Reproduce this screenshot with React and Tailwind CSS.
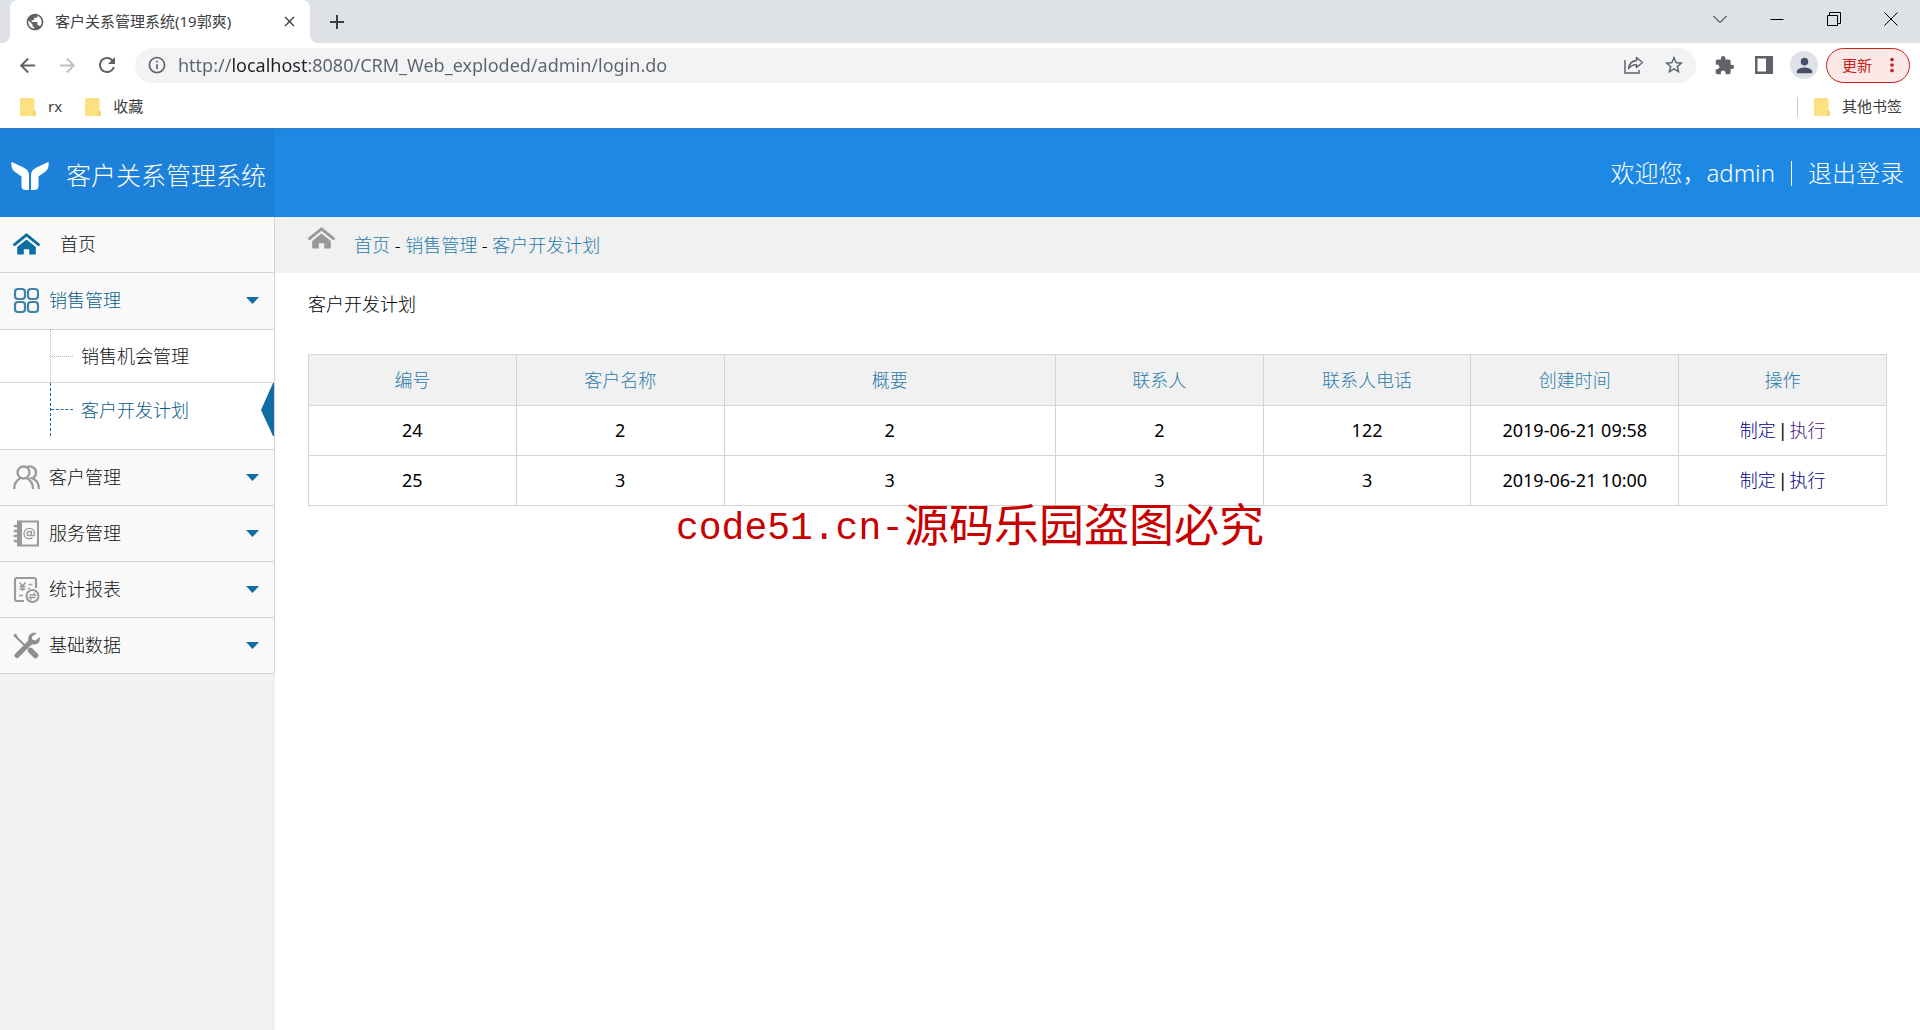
import React, { useState } from "react";
import {
  MdArrowBack,
  MdArrowForward,
  MdClose,
  MdExtension,
  MdInfoOutline,
  MdMoreVert,
  MdPerson,
  MdPublic,
  MdRefresh,
  MdStarBorder,
} from "react-icons/md";

const HomeIcon = ({ className = "" }) => (
  <svg viewBox="0 0 27 22" className={className} fill="currentColor" aria-hidden="true">
    <path
      d="M1.5 11.6 13.5 1.8 25.5 11.6"
      fill="none"
      stroke="currentColor"
      strokeWidth="2.8"
      strokeLinecap="round"
      strokeLinejoin="round"
    />
    <path d="M13.5 6.4 22.8 14v6.4a1.2 1.2 0 0 1-1.2 1.2h-5.4v-5.4h-5.4v5.4H5.4a1.2 1.2 0 0 1-1.2-1.2V14z" />
  </svg>
);

const GridIcon = () => (
  <svg viewBox="0 0 27 27" className="size-[27px] text-[#3f82a8]" fill="none" stroke="currentColor" strokeWidth="2.2" aria-hidden="true">
    <rect x="2" y="2" width="10" height="10" rx="3" />
    <rect x="15" y="2" width="10" height="10" rx="3" />
    <rect x="2" y="15" width="10" height="10" rx="3" />
    <rect x="15" y="15" width="10" height="10" rx="3" />
  </svg>
);

const UsersIcon = () => (
  <svg viewBox="0 0 27 27" className="size-[27px] text-[#9a9a9a]" fill="none" stroke="currentColor" strokeWidth="2.3" aria-hidden="true">
    <circle cx="10.5" cy="8.5" r="6" />
    <path d="M1.2 25c0-5.4 2.5-9 6.3-11M13.5 14c4 2 6.500 5.600 6.500 11" />
    <path d="M14 3.200c4-2.200 9 .6 9 5.300 0 2.800-1.500 4.800-4 5.700 4.300 1.500 6.800 5.800 6.800 10.800" />
  </svg>
);

const BookIcon = () => (
  <svg viewBox="0 0 27 27" className="size-[27px] text-[#9a9a9a]" fill="none" stroke="currentColor" aria-hidden="true">
    <path d="M5 1.500h20v24H5z" strokeWidth="2" />
    <path d="M7.500 2v23" strokeWidth="3" />
    <path d="M1.800 6H7M1.800 11H7M1.800 16H7M1.800 21H7" strokeWidth="2.400" strokeLinecap="round" />
    <circle cx="16.300" cy="13.500" r="2.200" strokeWidth="1.300" />
    <path d="M18.500 11v3.400c0 2.200 3 1.800 3-1 0-3-2.200-5-5.200-5s-5.300 2.200-5.300 5.200 2.300 5.100 5.300 5.100c1.200 0 2.200-.3 3-.8" strokeWidth="1.300" />
  </svg>
);

const ReportIcon = () => (
  <svg viewBox="0 0 27 27" className="size-[27px] text-[#9a9a9a]" fill="none" stroke="currentColor" aria-hidden="true">
    <path d="M11 25H4a2 2 0 0 1-2-2V4a2 2 0 0 1 2-2h17a2 2 0 0 1 2 2v8" strokeWidth="2.200" />
    <path d="m6.500 6.500 3 3.500 3-3.500M9.500 10v5M6.500 10.500h6M6.500 13h6M15.500 8.500h4M6 19.500h4M15 12.500h2" strokeWidth="1.500" />
    <circle cx="19.500" cy="20" r="6" strokeWidth="2" />
    <path d="M16.500 19h6l-2-2M22.500 21.500h-6l2 2" strokeWidth="1.300" />
  </svg>
);

const ToolsIcon = () => (
  <svg viewBox="0 0 27 27" className="size-[27px] text-[#8f8f8f]" fill="none" stroke="currentColor" strokeLinecap="round" aria-hidden="true">
    <path d="m1.500 3.500 13 12.500" strokeWidth="1.800" />
    <path d="M.5 2.200 3 1.800l2.500 4.700z" fill="currentColor" stroke="none" />
    <path d="m17.500 18.500 5 5" strokeWidth="5.500" />
    <path d="M17 10.500 4 23.500" strokeWidth="5" />
    <path d="M23.800 1.200c-4-1.500-8.800 1-8.500 5.500.1 1.800-.3 2.800-1.300 3.800l3.200 3.200c1-1 2-1.400 3.800-1.200 4.300.3 7-3.800 5.600-7.600l-4 3.600-3.200-.8-.6-3z" fill="currentColor" stroke="none" />
  </svg>
);

const Logo = () => (
  <svg viewBox="0 0 38 30" className="h-[30px] w-[38px] shrink-0" fill="#ffffff" aria-hidden="true">
    <path d="M.4.8 12.500 6.600C16 8.300 18 10.500 18 14.500V29h-3.500c-2.500 0-4-1.500-4-4V15.500L3.800 10.700C1.500 9 .4 6.500.4 4z" />
    <path d="M37.600.8 25.500 6.600C22 8.300 20 10.500 20 14.500V29h3.500c2.500 0 4-1.500 4-4V15.500l6.700-4.800c2.300-1.700 3.400-4.200 3.400-6.700z" />
  </svg>
);

const FolderIcon = () => (
  <svg viewBox="0 0 16 18" className="h-[18px] w-4 shrink-0" aria-hidden="true">
    <rect x="0" y="0" width="14.500" height="18" rx="1.500" fill="#fde080" />
    <path d="M13 12.500h1.500a1.500 1.500 0 0 1 1.500 1.500v2.500a1.500 1.500 0 0 1-3 0z" fill="#f6d365" />
  </svg>
);

const Caret = () => (
  <svg viewBox="0 0 13 7" className="h-[7px] w-[13px]" aria-hidden="true">
    <path d="M0 0h13L6.500 7z" fill="#0e6ea3" />
  </svg>
);

const bookmarks = ["rx", "收藏"];

const closedMenus = [
  { label: "客户管理", Icon: UsersIcon },
  { label: "服务管理", Icon: BookIcon },
  { label: "统计报表", Icon: ReportIcon },
  { label: "基础数据", Icon: ToolsIcon },
];

const columns = ["编号", "客户名称", "概要", "联系人", "联系人电话", "创建时间", "操作"];

const plans = [
  { id: 24, name: "2", summary: "2", contact: "2", phone: "122", created: "2019-06-21 09:58", visited: true },
  { id: 25, name: "3", summary: "3", contact: "3", phone: "3", created: "2019-06-21 10:00", visited: false },
];

const TabStrip = () => (
  <div className="flex h-[43px] items-stretch bg-[#dee1e6]">
    <div className="flex w-[10px] items-end bg-white">
      <div className="h-full w-full rounded-br-lg bg-[#dee1e6]" />
    </div>
    <div className="bg-[#dee1e6]">
      <div className="flex h-full w-[300px] items-center rounded-t-lg bg-white pr-3 pl-[15px] text-[#3c4043]">
        <MdPublic className="size-5 shrink-0 text-[#5f6368]" />
        <span className="ml-[10px] flex-1 truncate text-[15px]">客户关系管理系统(19郭爽)</span>
        <button type="button" aria-label="关闭标签页">
          <MdClose className="size-[17px]" />
        </button>
      </div>
    </div>
    <div className="bg-white">
      <div className="flex h-full w-[54px] items-center justify-center rounded-bl-lg bg-[#dee1e6]">
        <button type="button" aria-label="新标签页">
          <svg viewBox="0 0 16 16" className="size-4 text-[#3c4043]" stroke="currentColor" strokeWidth="2">
            <path d="M8 1v14M1 8h14" />
          </svg>
        </button>
      </div>
    </div>
    <div className="ml-auto flex pr-px text-black">
      <button type="button" aria-label="搜索标签页" className="flex w-[57px] items-center justify-center pb-[6px]">
        <svg viewBox="0 0 14 14" className="size-[14px]" fill="none" stroke="currentColor">
          <path d="m.5 4 6.500 6.500L13.500 4" />
        </svg>
      </button>
      <button type="button" aria-label="最小化" className="flex w-[57px] items-center justify-center pb-[6px]">
        <svg viewBox="0 0 14 14" className="size-[14px]" fill="none" stroke="currentColor">
          <path d="M.5 7.500h13" />
        </svg>
      </button>
      <button type="button" aria-label="还原" className="flex w-[57px] items-center justify-center pb-[6px]">
        <svg viewBox="0 0 14 14" className="size-[14px]" fill="none" stroke="currentColor">
          <path d="M.5 3.500h10v10H.5zM2.500 3.500v-3h11v11h-3" />
        </svg>
      </button>
      <button type="button" aria-label="关闭" className="flex w-[57px] items-center justify-center pb-[6px]">
        <svg viewBox="0 0 14 14" className="size-[14px]" fill="none" stroke="currentColor">
          <path d="m.5.5 13 13M13.500.5l-13 13" />
        </svg>
      </button>
    </div>
  </div>
);

const Toolbar = () => (
  <div className="flex h-11 items-center bg-white pr-[10px] pl-[7px] text-[#5f6368]">
    <button type="button" aria-label="后退" className="flex w-10 justify-center">
      <MdArrowBack className="size-[23px]" />
    </button>
    <button type="button" aria-label="前进" className="flex w-10 justify-center text-[#bdc1c6]">
      <MdArrowForward className="size-[23px]" />
    </button>
    <button type="button" aria-label="刷新" className="flex w-10 justify-center">
      <MdRefresh className="size-6" />
    </button>
    <div className="mx-2 flex h-[35px] flex-1 items-center rounded-full bg-[#f1f3f4] pr-[10px] pl-3">
      <MdInfoOutline className="size-5 shrink-0" />
      {/* host part of the address is darker than the rest */}
      <input
        type="text"
        aria-label="地址"
        defaultValue="http://localhost:8080/CRM_Web_exploded/admin/login.do"
        className="ml-[11px] min-w-0 flex-1 bg-[linear-gradient(90deg,#5f6368_54px,#202124_54px,#202124_129px,#5f6368_129px)] bg-clip-text text-lg text-transparent outline-none"
      />
      <button type="button" aria-label="分享" className="flex w-10 justify-center">
        <svg viewBox="0 0 20 18" className="h-[18px] w-5" fill="none" stroke="currentColor" strokeWidth="1.500">
          <path d="M1 4v13h14v-3" />
          <path d="M12.500 1.500 18.500 6.500l-6 5V8.700c-3.500 0-6 1-8 3.800.5-4.500 3.300-7.500 8-8z" strokeLinejoin="round" />
        </svg>
      </button>
      <button type="button" aria-label="收藏此页" className="-mr-2 flex w-10 justify-center">
        <MdStarBorder className="size-[22px]" />
      </button>
    </div>
    <button type="button" aria-label="扩展程序" className="flex w-10 justify-center">
      <MdExtension className="size-[21px]" />
    </button>
    <button type="button" aria-label="侧边栏" className="flex w-10 justify-center">
      <svg viewBox="0 0 18 18" className="size-[18px]">
        <path d="M0 0h18v18H0zM2.500 2.500v13H11v-13z" fill="currentColor" fillRule="evenodd" />
      </svg>
    </button>
    <button type="button" aria-label="用户" className="flex w-10 justify-center">
      <span className="flex size-7 items-center justify-center rounded-full bg-[#dee1e6]">
        <MdPerson className="size-[23px] text-[#47506b]" />
      </span>
    </button>
    <button
      type="button"
      className="ml-[2px] flex h-[35px] w-[84px] items-center justify-between rounded-full border border-[#c5221f] bg-[#fce8e6] pr-[6px] pl-[15px] text-[15px] text-[#c5221f]"
    >
      更新
      <MdMoreVert className="size-[22px]" />
    </button>
  </div>
);

const BookmarksBar = () => (
  <div className="flex h-[41px] items-center bg-white pr-[18px] pb-[2px] pl-5 text-[15px] text-[#3c4043]">
    {bookmarks.map((name) => (
      <a key={name} href="#" className="mr-[23px] flex items-center gap-3">
        <FolderIcon />
        {name}
      </a>
    ))}
    <a href="#" className="ml-auto flex items-center gap-3">
      <span className="mr-1 h-5 w-px bg-[#c8ccd1]" />
      <FolderIcon />
      其他书签
    </a>
  </div>
);

const Header = () => (
  <header className="flex h-[89px] items-stretch border-t border-[#2f7fc1] bg-[#1e88e5] font-light text-white">
    <div className="flex w-[275px] items-center gap-[17px] bg-[#1d80d9] pt-[5px] pl-[11px]">
      <Logo />
      <h1 className="text-[25px] whitespace-nowrap">客户关系管理系统</h1>
    </div>
    <div className="ml-auto flex items-center gap-4 pr-4 text-2xl">
      <span>欢迎您，admin</span>
      <span className="h-[25px] w-px bg-white" />
      <a href="#">退出登录</a>
    </div>
  </header>
);

const Sidebar = () => {
  const [open, setOpen] = useState(true);

  return (
    <aside className="w-[275px] shrink-0 bg-[#f1f1f1]">
      <nav className="border-r border-[#d4d4d4] bg-[#f9f9f9] text-lg font-light text-[#111111]">
        <a href="#" className="flex h-14 items-center gap-5 border-b border-[#d4d4d4] pb-[2px] pl-[13px]">
          <HomeIcon className="h-[22px] w-[27px] text-[#0e6ea3]" />
          首页
        </a>

        {/* 销售管理 */}
        <button
          type="button"
          onClick={() => setOpen(!open)}
          className="flex h-[57px] w-full items-center border-b border-[#d4d4d4] pr-[15px] pb-px pl-[13px] text-[#0a5c8a]"
        >
          <GridIcon />
          <span className="ml-[9px] flex-1 pb-px text-left">销售管理</span>
          <Caret />
        </button>
        {open && (
          <div className="border-b border-[#d4d4d4] bg-white pb-[13px]">
            <a href="#" className="flex h-[53px] items-center border-b border-[#d4d4d4] pl-[50px]">
              <span className="h-full border-l border-dotted border-[#bbbbbb]" />
              <span className="mr-2 w-[22px] border-t border-dotted border-[#bbbbbb]" />
              销售机会管理
            </a>
            <a href="#" className="flex h-[53px] items-center pl-[50px] text-[#0a5c8a]">
              <span className="h-full border-l border-dashed border-[#1b6d9c]" />
              <span className="mr-2 w-[22px] border-t border-dashed border-[#1b6d9c]" />
              客户开发计划
              <svg viewBox="0 0 13 53" className="ml-auto h-[53px] w-[13px]" aria-hidden="true">
                <path d="M13 0v53h-1L0 27 12 0z" fill="#0e6ea3" />
              </svg>
            </a>
          </div>
        )}

        {closedMenus.map(({ label, Icon }) => (
          <button
            key={label}
            type="button"
            className="flex h-14 w-full items-center border-b border-[#d4d4d4] pr-[15px] pl-[13px]"
          >
            <Icon />
            <span className="ml-[9px] flex-1 pb-px text-left">{label}</span>
            <Caret />
          </button>
        ))}
      </nav>
    </aside>
  );
};

const Breadcrumb = () => (
  <div className="flex h-14 bg-[#f1f1f1] pl-[33px] text-lg font-light">
    <HomeIcon className="mt-[10px] h-[22px] w-[27px] text-[#999999]" />
    <div className="mt-[14px] ml-[19px] text-black">
      <a href="#" className="text-[#2a7cab]">首页</a> -{" "}
      <a href="#" className="text-[#2a7cab]">销售管理</a> -{" "}
      <a href="#" className="text-[#2a7cab]">客户开发计划</a>
    </div>
  </div>
);

const PlanTable = () => (
  <table className="w-full table-fixed border-collapse text-center text-lg text-black">
    <colgroup>
      {columns.map((c) => (
        <col key={c} className={c === "概要" ? "w-[21%]" : ""} />
      ))}
    </colgroup>
    <thead>
      <tr className="h-[51px] bg-[#f1f1f1]">
        {columns.map((c) => (
          <th key={c} className="border border-[#d4d4d4] font-light text-[#2a7cab]">
            {c}
          </th>
        ))}
      </tr>
    </thead>
    <tbody>
      {plans.map((p) => (
        <tr key={p.id} className="h-[50px]">
          <td className="border border-[#d4d4d4] pb-[2px]">{p.id}</td>
          <td className="border border-[#d4d4d4] pb-[2px]">{p.name}</td>
          <td className="border border-[#d4d4d4] pb-[2px]">{p.summary}</td>
          <td className="border border-[#d4d4d4] pb-[2px]">{p.contact}</td>
          <td className="border border-[#d4d4d4] pb-[2px]">{p.phone}</td>
          <td className="border border-[#d4d4d4] pb-[2px]">{p.created}</td>
          <td className="border border-[#d4d4d4] pb-[2px] font-light">
            <a href="#" className="text-[#00008b]">制定</a>
            <span className="mx-[2px] font-normal">|</span>
            <a href="#" className={p.visited ? "text-[#4b1280]" : "text-[#00008b]"}>执行</a>
          </td>
        </tr>
      ))}
    </tbody>
  </table>
);

export default function App() {
  return (
    <div className="relative flex min-h-screen flex-col bg-white font-['Noto_Sans','Noto_Sans_CJK_SC',sans-serif]">
      <TabStrip />
      <Toolbar />
      <BookmarksBar />
      <Header />
      <div className="flex flex-1">
        <Sidebar />
        <main className="min-w-0 flex-1">
          <Breadcrumb />
          <section className="pt-[17px] pr-[33px] pl-[33px]">
            <h2 className="mb-9 text-lg font-light text-black">客户开发计划</h2>
            <PlanTable />
          </section>
        </main>
      </div>

      {/* watermark */}
      <div className="pointer-events-none absolute inset-x-0 top-[491px] flex items-center justify-center pl-5 leading-[60px] whitespace-nowrap text-[#c80000]">
        <span className="pt-2 font-['Liberation_Mono',monospace] text-[38px]">code51.cn-</span>
        <span className="text-[45px]">源码乐园盗图必究</span>
      </div>
    </div>
  );
}
